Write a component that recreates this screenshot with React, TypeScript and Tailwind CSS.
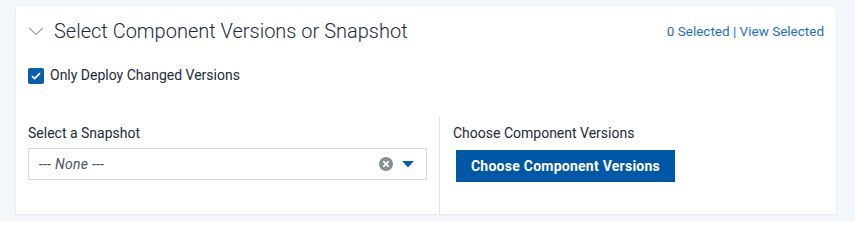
function ClearIcon() {
  return (
    <svg width="14" height="14" viewBox="0 0 14 14" className="shrink-0">
      <circle cx="7" cy="7" r="7" fill="#868e96" />
      <path d="M4.7 4.7l4.6 4.6M9.3 4.7l-4.6 4.6" stroke="#fff" strokeWidth="1.8" strokeLinecap="round" />
    </svg>
  );
}

function Caret() {
  return (
    <svg width="12" height="7" viewBox="0 0 12 7" className="shrink-0">
      <path d="M0 0h12L6 6.5z" fill="#0b5cab" />
    </svg>
  );
}

function Chevron() {
  return (
    <svg width="16" height="9" viewBox="0 0 16 9" className="shrink-0">
      <path d="M1 1l7 6.5L15 1" stroke="#9aa3ad" strokeWidth="1.2" fill="none" />
    </svg>
  );
}

export default function App() {
  return (
    <div
      className="w-[855px] h-[221px] bg-[#f3f6fa] pt-[7px] pl-4"
      style={{ fontFamily: "Roboto, 'Noto Sans', sans-serif" }}
    >
      <div className="w-[820px] h-[207px] bg-white shadow-[0_1px_2px_rgba(0,0,0,0.08)] flex flex-col">
        {/* Header */}
        <div className="flex items-center justify-between pl-[12px] pr-3 pt-[10px]">
          <div className="flex items-center gap-[10px]">
            <Chevron />
            <h2 className="text-[20px] leading-7 text-[#1c2a38] font-light">
              Select Component Versions or Snapshot
            </h2>
          </div>
          <div className="text-[13.5px] text-[#1f6fbf] pt-[1px]">
            0 Selected | View Selected
          </div>
        </div>

        {/* Checkbox */}
        <label className="flex items-center gap-[6px] pl-3 mt-[20px]">
          <span className="w-4 h-4 bg-[#0b5cab] rounded-[2px] flex items-center justify-center">
            <svg width="10" height="8" viewBox="0 0 10 8">
              <path d="M1 4.2l2.6 2.4L9 1.2" stroke="#fff" strokeWidth="1.8" fill="none" />
            </svg>
          </span>
          <span className="text-[14px] text-[#1c2a38]">Only Deploy Changed Versions</span>
        </label>

        {/* Columns */}
        <div className="flex flex-1 mt-[31px]">
          <div className="w-[424px] pl-3 pr-3 pt-[6px] border-r border-[#dde1e6]">
            <div className="text-[14px] text-[#1c2a38] leading-5">Select a Snapshot</div>
            <div className="mt-[5px] h-[32px] border border-[#d9dee4] flex items-center pl-[10px] pr-3 gap-[9px]">
              <span className="flex-1 italic text-[14px] text-[#4a5561] tracking-[0.3px]">--- None ---</span>
              <ClearIcon />
              <Caret />
            </div>
          </div>
          <div className="flex-1 pl-[13px] pt-[6px]">
            <div className="text-[14px] text-[#1c2a38] leading-5">Choose Component Versions</div>
            <button className="mt-[7px] ml-[3px] w-[219px] h-[32px] bg-[#0057a6] text-white text-[14px] font-bold tracking-[0.25px]">
              Choose Component Versions
            </button>
          </div>
        </div>
      </div>
    </div>
  );
}
